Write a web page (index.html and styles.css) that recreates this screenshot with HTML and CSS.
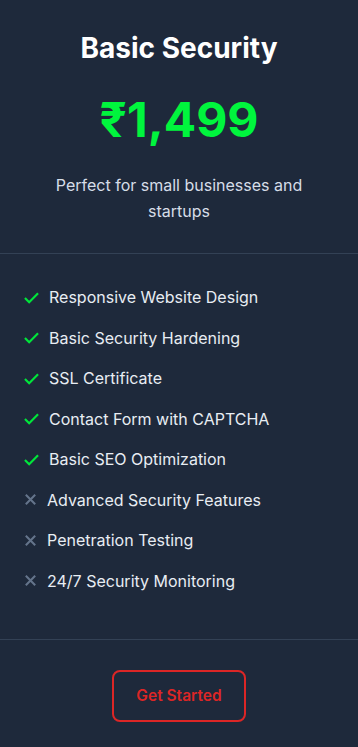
FILE: index.html
```html
<!DOCTYPE html>
<html lang="en">
<head>
    <meta charset="UTF-8">
    <meta name="viewport" content="width=device-width, initial-scale=1.0">
    <title>Basic Security</title>
    <link rel="stylesheet" href="styles.css">
</head>
<body>
    <div class="plan-card">
        <div class="plan-head">
            <h2 class="plan-title">Basic Security</h2>
            <div class="plan-price">₹1,499</div>
            <p class="plan-desc">Perfect for small businesses and startups</p>
        </div>

        <ul class="plan-features">
            <li class="yes"><svg class="icon" viewBox="0 0 16 16"><path d="M1 8.5l4.5 4.5L15 3.5"/></svg>Responsive Website Design</li>
            <li class="yes"><svg class="icon" viewBox="0 0 16 16"><path d="M1 8.5l4.5 4.5L15 3.5"/></svg>Basic Security Hardening</li>
            <li class="yes"><svg class="icon" viewBox="0 0 16 16"><path d="M1 8.5l4.5 4.5L15 3.5"/></svg>SSL Certificate</li>
            <li class="yes"><svg class="icon" viewBox="0 0 16 16"><path d="M1 8.5l4.5 4.5L15 3.5"/></svg>Contact Form with CAPTCHA</li>
            <li class="yes"><svg class="icon" viewBox="0 0 16 16"><path d="M1 8.5l4.5 4.5L15 3.5"/></svg>Basic SEO Optimization</li>
            <li class="no"><svg class="icon" viewBox="0 0 16 16"><path d="M3 3l10 10M13 3L3 13"/></svg>Advanced Security Features</li>
            <li class="no"><svg class="icon" viewBox="0 0 16 16"><path d="M3 3l10 10M13 3L3 13"/></svg>Penetration Testing</li>
            <li class="no"><svg class="icon" viewBox="0 0 16 16"><path d="M3 3l10 10M13 3L3 13"/></svg>24/7 Security Monitoring</li>
        </ul>

        <div class="plan-foot">
            <button class="btn-outline">Get Started</button>
        </div>
    </div>
</body>
</html>
```

FILE: styles.css
```css
body {
    margin: 0;
    background: #1e293b;
    font-family: Inter, 'Noto Sans', sans-serif;
    color: #e2e8f0;
}

.plan-card {
    background: #1e293b;
    min-height: 747px;
}

.plan-head {
    text-align: center;
    padding: 30px 24px 29px;
    border-bottom: 1px solid #334155;
}

.plan-title {
    margin: 0;
    font-size: 28px;
    font-weight: 700;
    color: #ffffff;
    line-height: 36px;
}

.plan-price {
    margin-top: 24px;
    font-size: 48px;
    font-weight: 700;
    color: #00f53d;
    line-height: 60px;
}

.plan-desc {
    margin: 22px 0 0;
    font-size: 16px;
    line-height: 26px;
    color: #d6dde8;
}

.plan-features {
    list-style: none;
    margin: 0;
    padding: 31px 24px 46px;
    border-bottom: 1px solid #334155;
}

.plan-features li {
    display: flex;
    align-items: center;
    font-size: 16px;
    line-height: 24px;
    margin-bottom: 16.5px;
    color: #e8edf3;
}

.plan-features li:last-child {
    margin-bottom: 0;
}

.icon {
    width: 15px;
    height: 15px;
    margin-right: 10px;
    fill: none;
    stroke-width: 2.3;
    stroke-linecap: butt;
}

.yes .icon {
    stroke: #00e63a;
}

.no .icon {
    width: 15px;
    height: 15px;
    margin-left: -1px;
    margin-right: 9px;
    stroke: #64748b;
    stroke-width: 2.2;
}

.plan-foot {
    display: flex;
    justify-content: center;
    padding-top: 30px;
}

.btn-outline {
    font-family: inherit;
    font-size: 15.5px;
    font-weight: 600;
    color: #dc2626;
    background: transparent;
    border: 2px solid #dc2626;
    border-radius: 8px;
    padding: 14.5px 22px;
    cursor: pointer;
}
```
